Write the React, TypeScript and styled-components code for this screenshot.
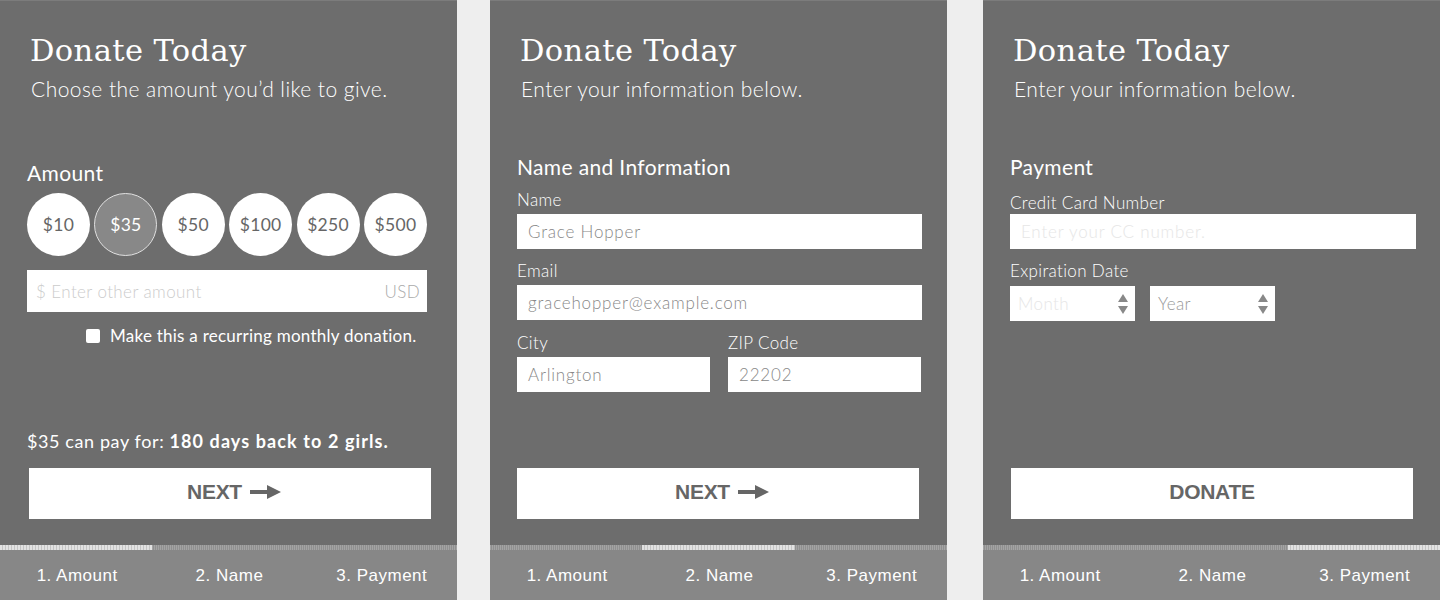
import React from "react";
import styled, { createGlobalStyle } from "styled-components";

const Global = createGlobalStyle`
  html, body { margin: 0; padding: 0; background: #eeeeee; }
  body { font-family: Lato, "Noto Sans", sans-serif; }
  * { box-sizing: border-box; }
`;

const Page = styled.div`
  display: flex;
  width: 1440px;
  height: 600px;
  overflow: hidden;
  background: #eeeeee;
`;

const Panel = styled.section<{ $offset: number }>`
  width: 457px;
  height: 600px;
  margin-left: ${(p) => p.$offset}px;
  display: flex;
  flex-direction: column;
  background: #6d6d6d;
  border-top: 1px solid #7c7c7c;
  color: #ffffff;
`;

const Body = styled.div<{ $right: number }>`
  flex: 1;
  display: flex;
  flex-direction: column;
  padding: 31px ${(p) => p.$right}px 26px 27px;
`;

const Title = styled.h1`
  margin: 0 0 0 3px;
  font-family: "DejaVu Serif", "Liberation Serif", serif;
  font-weight: 400;
  font-size: 30.5px;
  line-height: 38px;
  letter-spacing: 0.4px;
`;

const Subtitle = styled.p`
  margin: 6px 0 0 4px;
  font-family: Lato, sans-serif;
  font-weight: 300;
  font-size: 21px;
  line-height: 26px;
  letter-spacing: 0.45px;
`;

const SectionTitle = styled.h2<{ $top: number }>`
  margin: ${(p) => p.$top}px 0 0 0;
  font-family: Lato, sans-serif;
  font-weight: 400;
  font-size: 21px;
  line-height: 26px;
  letter-spacing: 0.35px;
`;

const Circles = styled.div`
  display: flex;
  justify-content: space-between;
  margin-top: 7px;
`;

const Circle = styled.div<{ $active?: boolean }>`
  width: 63px;
  height: 63px;
  border-radius: 50%;
  display: flex;
  align-items: center;
  justify-content: center;
  font-family: Lato, sans-serif;
  font-size: 17.5px;
  letter-spacing: 0.3px;
  background: ${(p) => (p.$active ? "#888888" : "#ffffff")};
  color: ${(p) => (p.$active ? "#ffffff" : "#666666")};
  border: ${(p) => (p.$active ? "1px solid #e0e0e0" : "none")};
`;

const AmountBox = styled.div`
  margin-top: 14px;
  height: 42px;
  background: #ffffff;
  display: flex;
  align-items: center;
  justify-content: space-between;
  padding: 0 7px 0 9px;
  font-family: Lato, sans-serif;
  font-weight: 300;
  font-size: 17px;
  letter-spacing: 0.4px;
`;

const Placeholder = styled.span<{ $color?: string }>`
  color: ${(p) => p.$color || "#cccccc"};
`;

const CheckRow = styled.label`
  display: flex;
  align-items: center;
  gap: 10px;
  margin: 13px 0 0 59px;
  font-family: Lato, sans-serif;
  font-size: 17px;
  letter-spacing: 0.25px;
`;

const CheckBox = styled.span`
  width: 14px;
  height: 14px;
  background: #ffffff;
  border-radius: 2px;
`;

const Spacer = styled.div`
  flex: 1;
`;

const Impact = styled.p`
  margin: 0 0 16px 0;
  font-family: Lato, sans-serif;
  font-size: 18px;
  line-height: 22px;
  letter-spacing: 0.6px;
  b { font-weight: 700; letter-spacing: 1.1px; }
`;

const Button = styled.button<{ $shift: number; $indent: number }>`
  height: 51px;
  width: 402px;
  margin-left: ${(p) => p.$shift}px;
  border: none;
  background: #ffffff;
  color: #666666;
  font-family: "Liberation Sans", Arial, sans-serif;
  font-weight: 700;
  font-size: 21px;
  letter-spacing: -0.3px;
  display: flex;
  align-items: center;
  justify-content: center;
  gap: 8px;
  padding: 0 0 3px ${(p) => p.$indent}px;
`;

const FieldLabel = styled.div<{ $top: number }>`
  margin-top: ${(p) => p.$top}px;
  font-family: Lato, sans-serif;
  font-weight: 300;
  font-size: 17px;
  line-height: 20px;
  letter-spacing: 0.35px;
`;

const Input = styled.div<{ $top?: number }>`
  margin-top: ${(p) => p.$top ?? 4}px;
  height: 35px;
  width: 100%;
  background: #ffffff;
  display: flex;
  align-items: center;
  padding: 0 11px;
  font-family: Lato, sans-serif;
  font-weight: 300;
  font-size: 17px;
  letter-spacing: 0.8px;
  color: #888888;
`;

const Row = styled.div`
  display: flex;
  gap: 18px;
`;

const Col = styled.div<{ $w: number }>`
  width: ${(p) => p.$w}px;
  display: flex;
  flex-direction: column;
`;

const SelectBox = styled.div`
  width: 125px;
  height: 35px;
  background: #ffffff;
  display: flex;
  align-items: center;
  justify-content: space-between;
  padding: 0 7px 0 8px;
  font-family: Lato, sans-serif;
  font-weight: 300;
  font-size: 17px;
  letter-spacing: 0.4px;
`;

const Selects = styled.div`
  display: flex;
  gap: 15px;
  margin-top: 5px;
`;

const Bar = styled.div`
  height: 5px;
  display: grid;
  grid-template-columns: 1fr 1fr 1fr;
  background: repeating-linear-gradient(90deg, #a3a3a3 0 1px, #8f8f8f 1px 2px);
`;

const BarSeg = styled.div<{ $on: boolean }>`
  background: ${(p) =>
    p.$on ? "repeating-linear-gradient(90deg, #e2e2e2 0 2px, #c4c4c4 2px 3px)" : "transparent"};
`;

const Footer = styled.nav`
  height: 50px;
  background: #878787;
  display: grid;
  grid-template-columns: 1fr 1fr 1fr;
  align-items: center;
  padding-top: 2px;
`;

const Step = styled.span`
  text-align: center;
  font-family: "Liberation Sans", Arial, sans-serif;
  font-size: 17px;
  letter-spacing: 0.5px;
  color: #ffffff;
  padding-left: 2px;
`;

const Arrow = () => (
  <svg width="31" height="16" viewBox="0 0 31 16">
    <rect x="0" y="6" width="19" height="4" fill="#666666" />
    <polygon points="17,1 31,8 17,15" fill="#666666" />
  </svg>
);

const Spinner = () => (
  <svg width="10" height="24" viewBox="0 0 10 24">
    <polygon points="5,2 10,10 0,10" fill="#888888" />
    <polygon points="0,14 10,14 5,22" fill="#888888" />
  </svg>
);

const Progress = ({ step }: { step: number }) => (
  <>
    <Bar>
      {[0, 1, 2].map((i) => (
        <BarSeg key={i} $on={i === step} />
      ))}
    </Bar>
    <Footer>
      <Step>1. Amount</Step>
      <Step>2. Name</Step>
      <Step>3. Payment</Step>
    </Footer>
  </>
);

export default function App() {
  return (
    <Page>
      <Global />
      <Panel $offset={0}>
        <Body $right={30}>
          <Title>Donate Today</Title>
          <Subtitle>Choose the amount you’d like to give.</Subtitle>
          <SectionTitle $top={58}>Amount</SectionTitle>
          <Circles>
            <Circle>$10</Circle>
            <Circle $active>$35</Circle>
            <Circle>$50</Circle>
            <Circle>$100</Circle>
            <Circle>$250</Circle>
            <Circle>$500</Circle>
          </Circles>
          <AmountBox>
            <Placeholder>$ Enter other amount</Placeholder>
            <Placeholder $color="#aaaaaa">USD</Placeholder>
          </AmountBox>
          <CheckRow>
            <CheckBox />
            Make this a recurring monthly donation.
          </CheckRow>
          <Spacer />
          <Impact>
            $35 can pay for: <b>180 days back to 2 girls.</b>
          </Impact>
          <Button $shift={2} $indent={8}>
            NEXT <Arrow />
          </Button>
        </Body>
        <Progress step={0} />
      </Panel>

      <Panel $offset={33}>
        <Body $right={25}>
          <Title>Donate Today</Title>
          <Subtitle>Enter your information below.</Subtitle>
          <SectionTitle $top={52}>Name and Information</SectionTitle>
          <FieldLabel $top={10}>Name</FieldLabel>
          <Input>Grace Hopper</Input>
          <FieldLabel $top={12}>Email</FieldLabel>
          <Input>gracehopper@example.com</Input>
          <Row>
            <Col $w={193}>
              <FieldLabel $top={13}>City</FieldLabel>
              <Input>Arlington</Input>
            </Col>
            <Col $w={193}>
              <FieldLabel $top={13}>ZIP Code</FieldLabel>
              <Input>22202</Input>
            </Col>
          </Row>
          <Spacer />
          <Button $shift={0} $indent={8}>
            NEXT <Arrow />
          </Button>
        </Body>
        <Progress step={1} />
      </Panel>

      <Panel $offset={36}>
        <Body $right={24}>
          <Title>Donate Today</Title>
          <Subtitle>Enter your information below.</Subtitle>
          <SectionTitle $top={52}>Payment</SectionTitle>
          <FieldLabel $top={13}>Credit Card Number</FieldLabel>
          <Input $top={1}>
            <Placeholder $color="#e6e6e6">Enter your CC number.</Placeholder>
          </Input>
          <FieldLabel $top={12}>Expiration Date</FieldLabel>
          <Selects>
            <SelectBox>
              <Placeholder $color="#e6e6e6">Month</Placeholder>
              <Spinner />
            </SelectBox>
            <SelectBox>
              <Placeholder $color="#999999">Year</Placeholder>
              <Spinner />
            </SelectBox>
          </Selects>
          <Spacer />
          <Button $shift={1} $indent={0}>
            DONATE
          </Button>
        </Body>
        <Progress step={2} />
      </Panel>
    </Page>
  );
}
